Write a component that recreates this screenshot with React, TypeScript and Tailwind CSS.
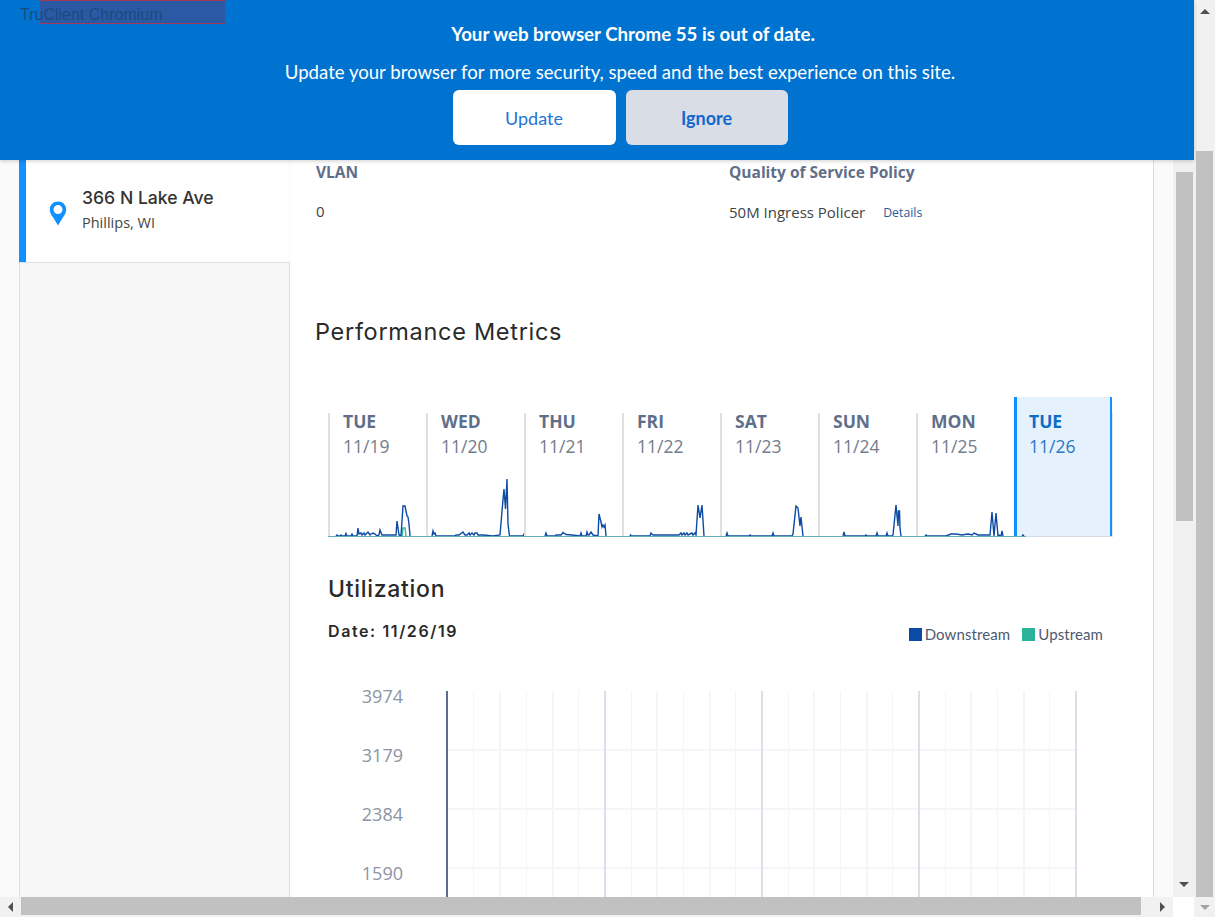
import React from "react";

const days = [
  {
    name: "TUE",
    date: "11/19",
    points: [[6, 0], [7, 1], [8, 0], [10, 0], [11, 1], [12, 0], [15, 0], [16, 2.5], [17, 0], [21, 0], [22, 2], [23, 0], [27, 0], [28, 8], [29, 2], [31, 3], [32, 1], [34, 3], [35, 1], [38, 4], [40, 1], [41, 2], [43, 3], [45, 2], [47, 0], [49, 1], [50, 6], [52, 1], [64, 1], [66, 1], [67, 15], [69, 1], [71, 0], [73, 30], [75, 30], [77, 20], [78, 19], [79, 12], [80, 0]],
    teal: [[72, 0], [73, 8], [75, 8], [76, 0]],
  },
  {
    name: "WED",
    date: "11/20",
    points: [[4, 0], [5, 5], [6, 2], [7, 3], [8, 0], [27, 0], [28, 1], [31, 1], [35, 4], [37, 1], [39, 1], [41, 3], [42, 1], [44, 3], [46, 1], [47, 3], [49, 3], [50, 1], [55, 1], [65, 0], [72, 1], [74, 25], [76, 47], [77.5, 27], [79, 57], [80, 12], [81.5, 0], [95, 0], [96, 2], [97, 0]],
  },
  {
    name: "THU",
    date: "11/21",
    points: [[19, 0], [20, 3], [21, 0], [29, 0], [30, 1], [35, 1], [37, 3.5], [40, 1.5], [46, 1], [54, 0], [55, 3], [56, 0], [60, 0], [61, 4], [62, 1], [63, 1], [65, 4], [67, 1], [72, 0], [73, 22], [75, 14], [76, 9], [77, 11], [78, 9], [79, 11], [80, 0]],
  },
  {
    name: "FRI",
    date: "11/22",
    points: [[6, 0], [6.5, 1], [7, 0], [26, 0], [27, 3], [29, 1], [55, 1], [57, 3], [58, 1], [60, 3], [61, 1], [63, 3], [64, 1], [68, 3], [69, 1], [71, 3], [72, 1], [74, 31], [76, 18], [78, 31], [80, 0]],
  },
  {
    name: "SAT",
    date: "11/23",
    points: [[4, 0], [5, 3], [6, 0], [27, 0], [28, 1], [29, 0], [50, 0], [51, 3], [52, 0], [70, 0], [71, 2], [74, 30], [76, 28], [78, 10], [79, 19], [81, 0]],
  },
  {
    name: "SUN",
    date: "11/24",
    points: [[23, 0], [24, 4], [25, 0], [45, 0], [46, 1], [47, 0], [56, 0], [57, 3], [58, 0], [66, 0], [67, 3], [68, 0], [72, 0], [73, 1], [76, 31], [78, 10], [78.5, 25], [79.5, 25], [80, 8], [81, 0]],
  },
  {
    name: "MON",
    date: "11/25",
    points: [[7, 0], [8, 1], [9, 0], [28, 0], [33, 2], [38, 2], [44, 1], [50, 2], [54, 1], [56, 3], [60, 1], [66, 1], [72, 1], [74, 24], [76, 0], [78, 23], [80, 0], [81, 1], [83, 0], [84, 5], [85, 0]],
  },
  {
    name: "TUE",
    date: "11/26",
    points: [[5, 0], [6, 1], [7, 0]],
    selected: true,
  },
];

const toLine = (points: number[][]) =>
  points.map(([x, h]) => `${x},${59 - h}`).join(" ");

const DayCell = ({ day }: { day: (typeof days)[number] }) => (
  <div
    className={
      day.selected
        ? "flex h-[140px] w-[98px] shrink-0 flex-col border-l-[3px] border-r-2 border-[#1290ff] bg-[#e5f2fd] pl-[12px]"
        : "flex h-[124px] w-[98px] shrink-0 flex-col border-l-2 border-[#e0e0e0] pl-[13px]"
    }
  >
    <div
      className={
        day.selected
          ? "mt-[14px] text-[17.5px] font-bold leading-[20px] text-[#0f6cc4]"
          : "mt-[-2px] text-[17.5px] font-bold leading-[20px] text-[#5f6f8a]"
      }
    >
      {day.name}
    </div>
    <div
      className={
        day.selected
          ? "mt-[5px] text-[17.5px] leading-[20px] text-[#2a78c4]"
          : "mt-[5px] text-[17.5px] leading-[20px] text-[#737c8c]"
      }
    >
      {day.date}
    </div>
    <svg
      width="93"
      height="60"
      viewBox="0 0 93 60"
      className={day.selected ? "mt-auto ml-[-12px] overflow-visible" : "mt-auto ml-[-13px] overflow-visible"}
    >
      {day.selected && (
        <line x1="-3" y1="59.5" x2="95" y2="59.5" stroke="#d5dce5" strokeWidth="1" />
      )}
      {day.teal && (
        <polyline points={toLine(day.teal)} fill="none" stroke="#3bb8a5" strokeWidth="1.5" />
      )}
      <polyline
        points={toLine(day.points)}
        fill="none"
        stroke="#0b4aa5"
        strokeWidth="1.4"
      />
      <line x1={day.selected ? -3 : -2} y1="59.5" x2={day.selected ? 9 : 96} y2="59.5" stroke="#62b0b8" strokeWidth="1" />
    </svg>
  </div>
);

const GridChart = () => {
  const vertical = Array.from({ length: 25 }, (_, i) => (i === 0 ? 1 : 1.8 + i * 26.18));
  return (
    <svg width="632" height="206" className="block shrink-0" shapeRendering="crispEdges">
      {[59, 118, 177].map((y) => (
        <line key={y} x1="2" y1={y} x2="630" y2={y} stroke="#f6f6f9" strokeWidth="2" />
      ))}
      {vertical.map((x, i) => (
        <line
          key={i}
          x1={x}
          y1="0"
          x2={x}
          y2="206"
          stroke={i === 0 ? "#5c6f91" : i % 6 === 0 ? "#dcdfe9" : "#f5f5f9"}
          strokeWidth={i === 0 ? 2 : i % 2 === 0 ? 2 : 1}
        />
      ))}
    </svg>
  );
};

const Arrow = ({ dir, color = "#505050" }: { dir: string; color?: string }) => {
  const pts: Record<string, string> = {
    up: "0,5 5,0 10,5",
    down: "0,0 10,0 5,5",
    left: "5,0 5,10 0,5",
    right: "0,0 0,10 5,5",
  };
  const vertical = dir === "up" || dir === "down";
  return (
    <svg width={vertical ? 10 : 5} height={vertical ? 5 : 10} className="block">
      <polygon points={pts[dir]} fill={color} />
    </svg>
  );
};

export default function App() {
  return (
    <div className="relative flex h-[917px] w-[1215px] flex-col overflow-hidden bg-[#fafafa] font-['Open_Sans',sans-serif] text-[#333]">
      <div className="flex h-[897px] shrink-0">
        <div className="flex w-[1194px] flex-col">
          {/* Update banner */}
          <div className="z-10 flex h-[160px] shrink-0 flex-col items-center bg-[#0073d1] pl-[46px] text-white shadow-[0_1px_4px_rgba(0,0,0,0.2)]">
            <div className="mt-[22px] pl-[26px] font-['Lato',sans-serif] text-[18.7px] font-bold leading-[24px]">
              Your web browser Chrome 55 is out of date.
            </div>
            <div className="mt-[14px] font-['Lato',sans-serif] text-[18.6px] leading-[24px]">
              Update your browser for more security, speed and the best experience on this site.
            </div>
            <div className="mt-[6px] flex gap-[10px]">
              <button className="h-[55px] w-[163px] rounded-[6px] bg-white pt-[1px] font-['Lato',sans-serif] text-[18px] text-[#1f74d4]">
                Update
              </button>
              <button className="h-[55px] w-[162px] rounded-[6px] bg-[#d9dde6] pt-[1px] font-['Lato',sans-serif] text-[18px] font-bold text-[#1268cc]">
                Ignore
              </button>
            </div>
          </div>

          <div className="flex min-h-0 flex-1">
            <div className="flex w-[1173px] pl-[19px]">
              {/* Sidebar */}
              <div className="flex w-[271px] shrink-0 flex-col">
                <div className="flex h-[102px] w-[270px] shrink-0 items-center border-l-[7px] border-[#1290ff] bg-white pl-[23px]">
                  <svg width="18" height="25" viewBox="0 0 18 25" className="mt-[4px] shrink-0">
                    <path
                      d="M9 0.5C4.3 0.5 0.8 4 0.8 8.5c0 3 1.6 5.5 3 7.6L9 24.5l5.2-8.4c1.4-2.1 3-4.6 3-7.6C17.2 4 13.7 0.5 9 0.5z"
                      fill="#1290ff"
                    />
                    <circle cx="9" cy="8.6" r="4.5" fill="#fff" />
                  </svg>
                  <div className="ml-[15px] mt-[-3px]">
                    <div className="font-['Inter',sans-serif] text-[17.6px] font-medium leading-[22px] text-[#333]">
                      366 N Lake Ave
                    </div>
                    <div className="mt-[4px] text-[14.5px] leading-[20px] text-[#444]">Phillips, WI</div>
                  </div>
                </div>
                <div className="flex-1 border-x border-t border-[#dcdfe8] bg-[#f7f7f8]" />
              </div>

              {/* Main panel */}
              <div className="flex w-[864px] shrink-0 flex-col overflow-hidden border-r border-[#d9dbe8] bg-white pl-[26px]">
                <div className="flex">
                  <div className="w-[413px]">
                    <div className="text-[15.5px] font-bold leading-[24px] text-[#5f6f8a]">VLAN</div>
                    <div className="mt-[15px] text-[15px] leading-[24px] text-[#444]">0</div>
                  </div>
                  <div>
                    <div className="text-[15.5px] font-bold leading-[24px] text-[#5f6f8a]">
                      Quality of Service Policy
                    </div>
                    <div className="mt-[15px] flex items-center text-[15px] leading-[24px] text-[#444]">
                      50M Ingress Policer
                      <span className="ml-[18px] mt-[2px] text-[12.3px] text-[#2a5ca0]">Details</span>
                    </div>
                  </div>
                </div>

                <div className="ml-[-1px] mt-[92px] font-['Inter',sans-serif] text-[23.5px] leading-[30px] tracking-[0.7px] text-[#2a2a2a]">
                  Performance Metrics
                </div>

                {/* Day strip */}
                <div className="ml-[12px] mt-[50px] flex h-[140px] w-[785px] items-end">
                  {days.map((day, i) => (
                    <DayCell key={i} day={day} />
                  ))}
                  <div className="h-[124px] w-[1px] shrink-0 bg-[#e6e6e6]" />
                </div>

                <div className="ml-[12px] mt-[38px] font-['Inter',sans-serif] text-[23px] font-medium leading-[28px] tracking-[0.7px] text-[#2a2a2a]">
                  Utilization
                </div>

                <div className="ml-[12px] mt-[16px] flex h-[24px] w-[775px] items-center justify-between">
                  <div className="font-['Inter',sans-serif] text-[16px] font-semibold tracking-[1.6px] text-[#2a2a2a]">
                    Date: 11/26/19
                  </div>
                  <div className="mt-[6px] flex items-center font-['Lato',sans-serif] text-[15px] tracking-[0.1px] text-[#4d5a70]">
                    <span className="h-[13px] w-[13px] bg-[#0b4aa5]" />
                    <span className="ml-[3px]">Downstream</span>
                    <span className="ml-[12px] h-[13px] w-[13px] bg-[#2bb29a]" />
                    <span className="ml-[3px]">Upstream</span>
                  </div>
                </div>

                {/* Utilization chart */}
                <div className="ml-[12px] mt-[43px] flex shrink-0">
                  <div className="w-[75px] text-right text-[18px] leading-[20px] text-[#8d95a5]">
                    {["3974", "3179", "2384", "1590"].map((v) => (
                      <div key={v} className="h-[59px]">
                        {v}
                      </div>
                    ))}
                  </div>
                  <div className="ml-[43px] mt-[5px]">
                    <GridChart />
                  </div>
                </div>
              </div>
            </div>

            {/* Inner scrollbar */}
            <div className="flex w-[21px] shrink-0 flex-col items-center bg-[#f0f0f0] pl-[1px]">
              <div className="mt-[12px] h-[349px] w-[17px] bg-[#c1c1c1]" />
              <div className="mb-[10px] mt-auto">
                <Arrow dir="down" />
              </div>
            </div>
          </div>
        </div>

        {/* Outer scrollbar */}
        <div className="flex w-[21px] shrink-0 flex-col items-center bg-[#f1f1f1]">
          <div className="mt-[9px]">
            <Arrow dir="up" />
          </div>
          <div className="mt-auto h-[746px] w-[17px] bg-[#c1c1c1]" />
        </div>
      </div>

      {/* Horizontal scrollbar */}
      <div className="flex h-[20px] shrink-0">
        <div className="flex w-[1173px] items-center bg-[#f1f1f1]">
          <div className="ml-[8px] w-[13px]">
            <Arrow dir="left" />
          </div>
          <div className="mb-[2px] h-[18px] w-[1120px] bg-[#c1c1c1]" />
          <div className="ml-[19px]">
            <Arrow dir="right" />
          </div>
        </div>
        <div className="w-[21px] bg-white" />
        <div className="flex w-[21px] items-center justify-center bg-[#f1f1f1]">
          <Arrow dir="down" color="#a3a3a3" />
        </div>
      </div>

      {/* Automation overlay */}
      <div className="absolute left-[39px] top-0 z-20 h-[24px] w-[187px] border border-[#a03a58] bg-[#484987]/60" />
      <div className="absolute left-[20px] top-[6px] z-20 font-['Liberation_Sans',sans-serif] text-[16px] leading-[18px] text-[#1b4a80]">
        TruClient Chromium
      </div>
    </div>
  );
}
